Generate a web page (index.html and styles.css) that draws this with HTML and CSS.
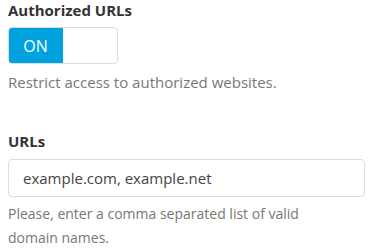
FILE: index.html
```html
<!DOCTYPE html>
<html>
<head>
<meta charset="utf-8">
<link rel="stylesheet" href="styles.css">
</head>
<body>
<div class="form">
  <div class="field">
    <div class="label">Authorized URLs</div>
    <div class="toggle">
      <span class="toggle-on">ON</span>
      <span class="toggle-off"></span>
    </div>
    <div class="help">Restrict access to authorized websites.</div>
  </div>
  <div class="field field-urls">
    <div class="label">URLs</div>
    <input class="input" type="text" value="example.com, example.net">
    <div class="help help-urls">Please, enter a comma separated list of valid domain names.</div>
  </div>
</div>
</body>
</html>
```

FILE: styles.css
```css
html, body {
  margin: 0;
  padding: 0;
  background: #fff;
}
body {
  font-family: "Open Sans", "Noto Sans", sans-serif;
  color: #333;
  padding: 0 8px;
}
.form {
  display: flex;
  flex-direction: column;
}
.label {
  font-weight: 700;
  font-size: 15px;
  line-height: 20px;
  color: #333;
}
.toggle {
  margin-top: 7px;
  width: 110px;
  height: 37px;
  box-sizing: border-box;
  border: 1px solid #dcdcdc;
  border-radius: 4px;
  display: flex;
  overflow: hidden;
}
.toggle-on {
  width: 55px;
  background: #00a1df;
  color: #fff;
  font-size: 16px;
  display: flex;
  align-items: center;
  justify-content: center;
  margin: -1px 0 -1px -1px;
}
.toggle-off {
  flex: 1;
}
.help {
  margin-top: 7px;
  font-size: 15px;
  line-height: 22px;
  color: #777;
}
.field-urls {
  margin-top: 38px;
}
.input {
  margin-top: 8px;
  width: 357px;
  height: 38px;
  box-sizing: border-box;
  border: 1px solid #dcdcdc;
  border-radius: 4px;
  padding: 0 14px;
  font-family: "Open Sans", "Noto Sans", sans-serif;
  font-size: 15px;
  color: #444;
  outline: none;
}
.help-urls {
  margin-top: 5px;
  width: 330px;
  font-size: 14px;
  line-height: 24px;
}
```
